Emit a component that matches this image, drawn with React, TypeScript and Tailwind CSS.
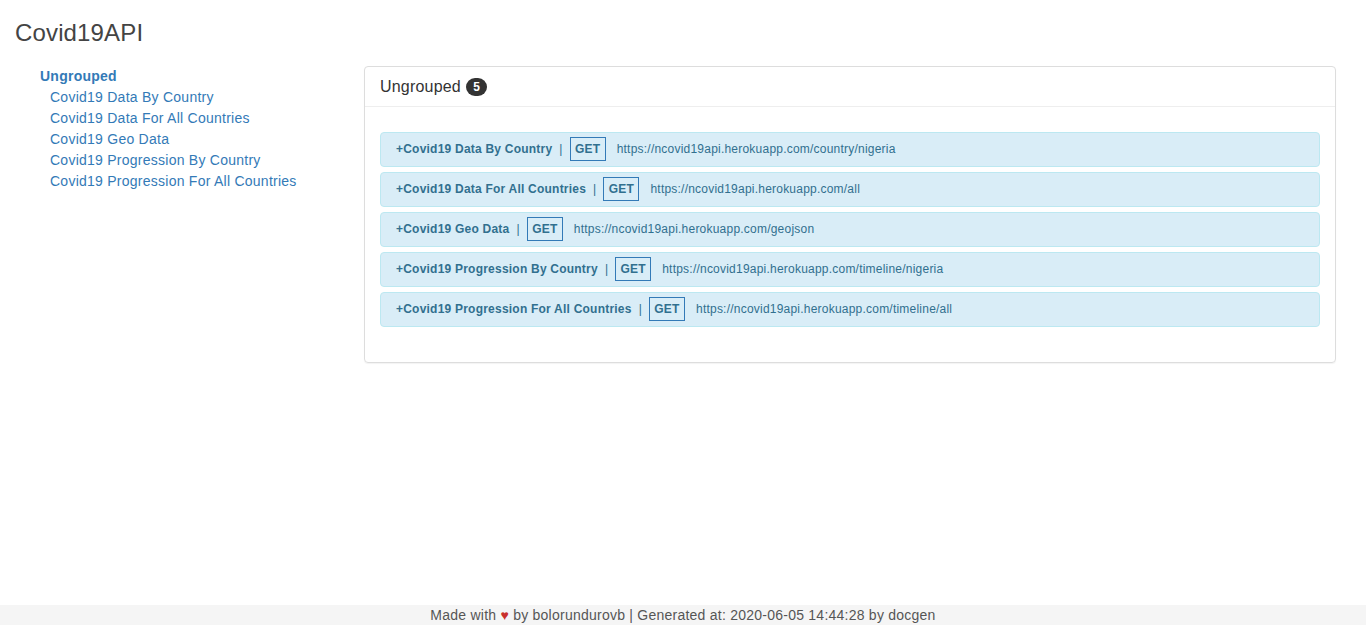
import React from "react";

const endpoints = [
  { name: "Covid19 Data By Country", url: "https://ncovid19api.herokuapp.com/country/nigeria" },
  { name: "Covid19 Data For All Countries", url: "https://ncovid19api.herokuapp.com/all" },
  { name: "Covid19 Geo Data", url: "https://ncovid19api.herokuapp.com/geojson" },
  { name: "Covid19 Progression By Country", url: "https://ncovid19api.herokuapp.com/timeline/nigeria" },
  { name: "Covid19 Progression For All Countries", url: "https://ncovid19api.herokuapp.com/timeline/all" },
];

export default function App() {
  return (
    <div
      className="min-h-screen flex flex-col bg-white text-[#333]"
      style={{ fontFamily: '"Liberation Sans", Arial, sans-serif' }}
    >
      <h1 className="text-[24px] leading-[26px] text-[#444] pl-[15px] pt-[20px] tracking-[0.15px]">Covid19API</h1>

      <div className="flex pt-[14px]">
        {/* Sidebar */}
        <div className="w-[364px] shrink-0 pl-[40px] tracking-[0.25px]">
          <div className="text-[14px] leading-[20px] font-bold text-[#337ab7] pt-[6px]">Ungrouped</div>
          <ul className="pl-[10px] pt-[1px]">
            {endpoints.map((e) => (
              <li key={e.name} className="text-[14px] leading-[21px] text-[#337ab7]">
                {e.name}
              </li>
            ))}
          </ul>
        </div>

        {/* Panel */}
        <div className="mt-[6px] w-[972px] self-start border border-[#ddd] rounded-[4px] shadow-[0_1px_1px_rgba(0,0,0,0.05)]">
          <div className="h-[40px] border-b border-[#eee] px-[15px] flex items-center">
            <span className="text-[16px] text-[#333] tracking-[0.2px]">Ungrouped</span>
            <span className="ml-[5px] bg-[#333] text-white text-[12px] font-bold rounded-[10px] h-[18px] min-w-[21px] px-[7px] flex items-center justify-center">
              5
            </span>
          </div>
          <div className="px-[15px] pt-[25px] pb-[35px] flex flex-col gap-[5px]">
            {endpoints.map((e) => (
              <div
                key={e.name}
                className="h-[35px] bg-[#d9edf7] border border-[#bce8f1] rounded-[4px] px-[15px] pb-[2px] flex items-center text-[12px] text-[#31708f] tracking-[0.22px]"
              >
                <span className="font-bold">+{e.name}</span>
                <span className="mx-[7px]">|</span>
                <span className="font-bold border border-[#337ab7] px-[4px] w-[36px] text-center leading-[22px]">GET</span>
                <span className="ml-[11px]">{e.url}</span>
              </div>
            ))}
          </div>
        </div>
      </div>

      <footer className="mt-auto h-[20px] bg-[#f5f5f5] text-center text-[14px] leading-[20px] text-[#555] tracking-[0.24px]">
        Made with <span className="text-[#c9302c]">♥</span> by bolorundurovb | Generated at: 2020-06-05 14:44:28 by docgen
      </footer>
    </div>
  );
}
